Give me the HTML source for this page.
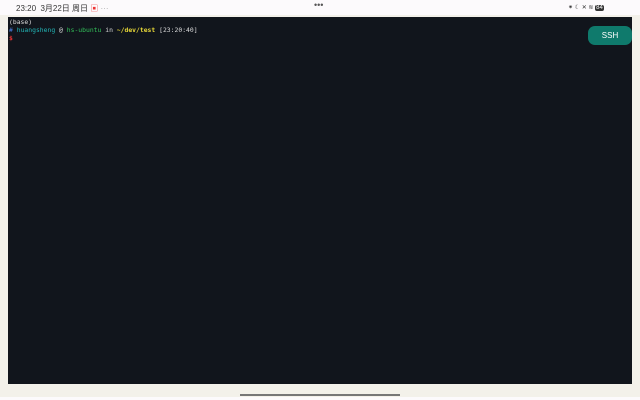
<!DOCTYPE html><html><head><style>
body{margin:0;width:640px;height:400px;background:#fcfafc;position:relative;overflow:hidden;font-family:"Liberation Sans","Noto Sans CJK SC",sans-serif}
.bg{position:absolute;left:0;top:15px;width:640px;height:382px;background:#f3f1ea}
.term{position:absolute;left:8px;top:17px;width:624px;height:367px;background:#11151c;font-family:"DejaVu Sans Mono",monospace;font-size:6.4px;line-height:8px;color:#ddd;padding:1px 0 0 1px;box-sizing:border-box}
.ssh{position:absolute;left:588px;top:26px;width:44px;height:19px;border-radius:7px;background:#0f7a6c;color:#fff;font-size:8px;text-align:center;line-height:19px}
.sb{position:absolute;top:3px;font-size:8px;color:#333}
.home{position:absolute;left:240px;top:394px;width:160px;height:2px;background:#777}
</style></head><body>
<div class="sb" style="left:16px">23:20&nbsp; 3月22日 周日 <span style="color:#e33">▣</span> <span style="color:#aaa">···</span></div>
<div class="sb" style="left:314px;color:#555;font-size:9px;top:0">•••</div>
<div class="sb" style="left:568px;font-size:6px;top:4px">⁕ ☾ ✕ ≋ <span style="background:#333;color:#fff;border-radius:2px;padding:0 1px">84</span></div>
<div class="bg"></div>
<div class="term">(base)<br><span style="color:#4a7ee0">#</span> <span style="color:#22b5b5">huangsheng</span> @ <span style="color:#33c05a">hs-ubuntu</span> in <span style="color:#e8d838;font-weight:bold">~/dev/test</span> [23:20:40]<br><span style="color:#e33;font-weight:bold">$</span></div>
<div class="ssh">SSH</div>
<div class="home"></div>
</body></html>
